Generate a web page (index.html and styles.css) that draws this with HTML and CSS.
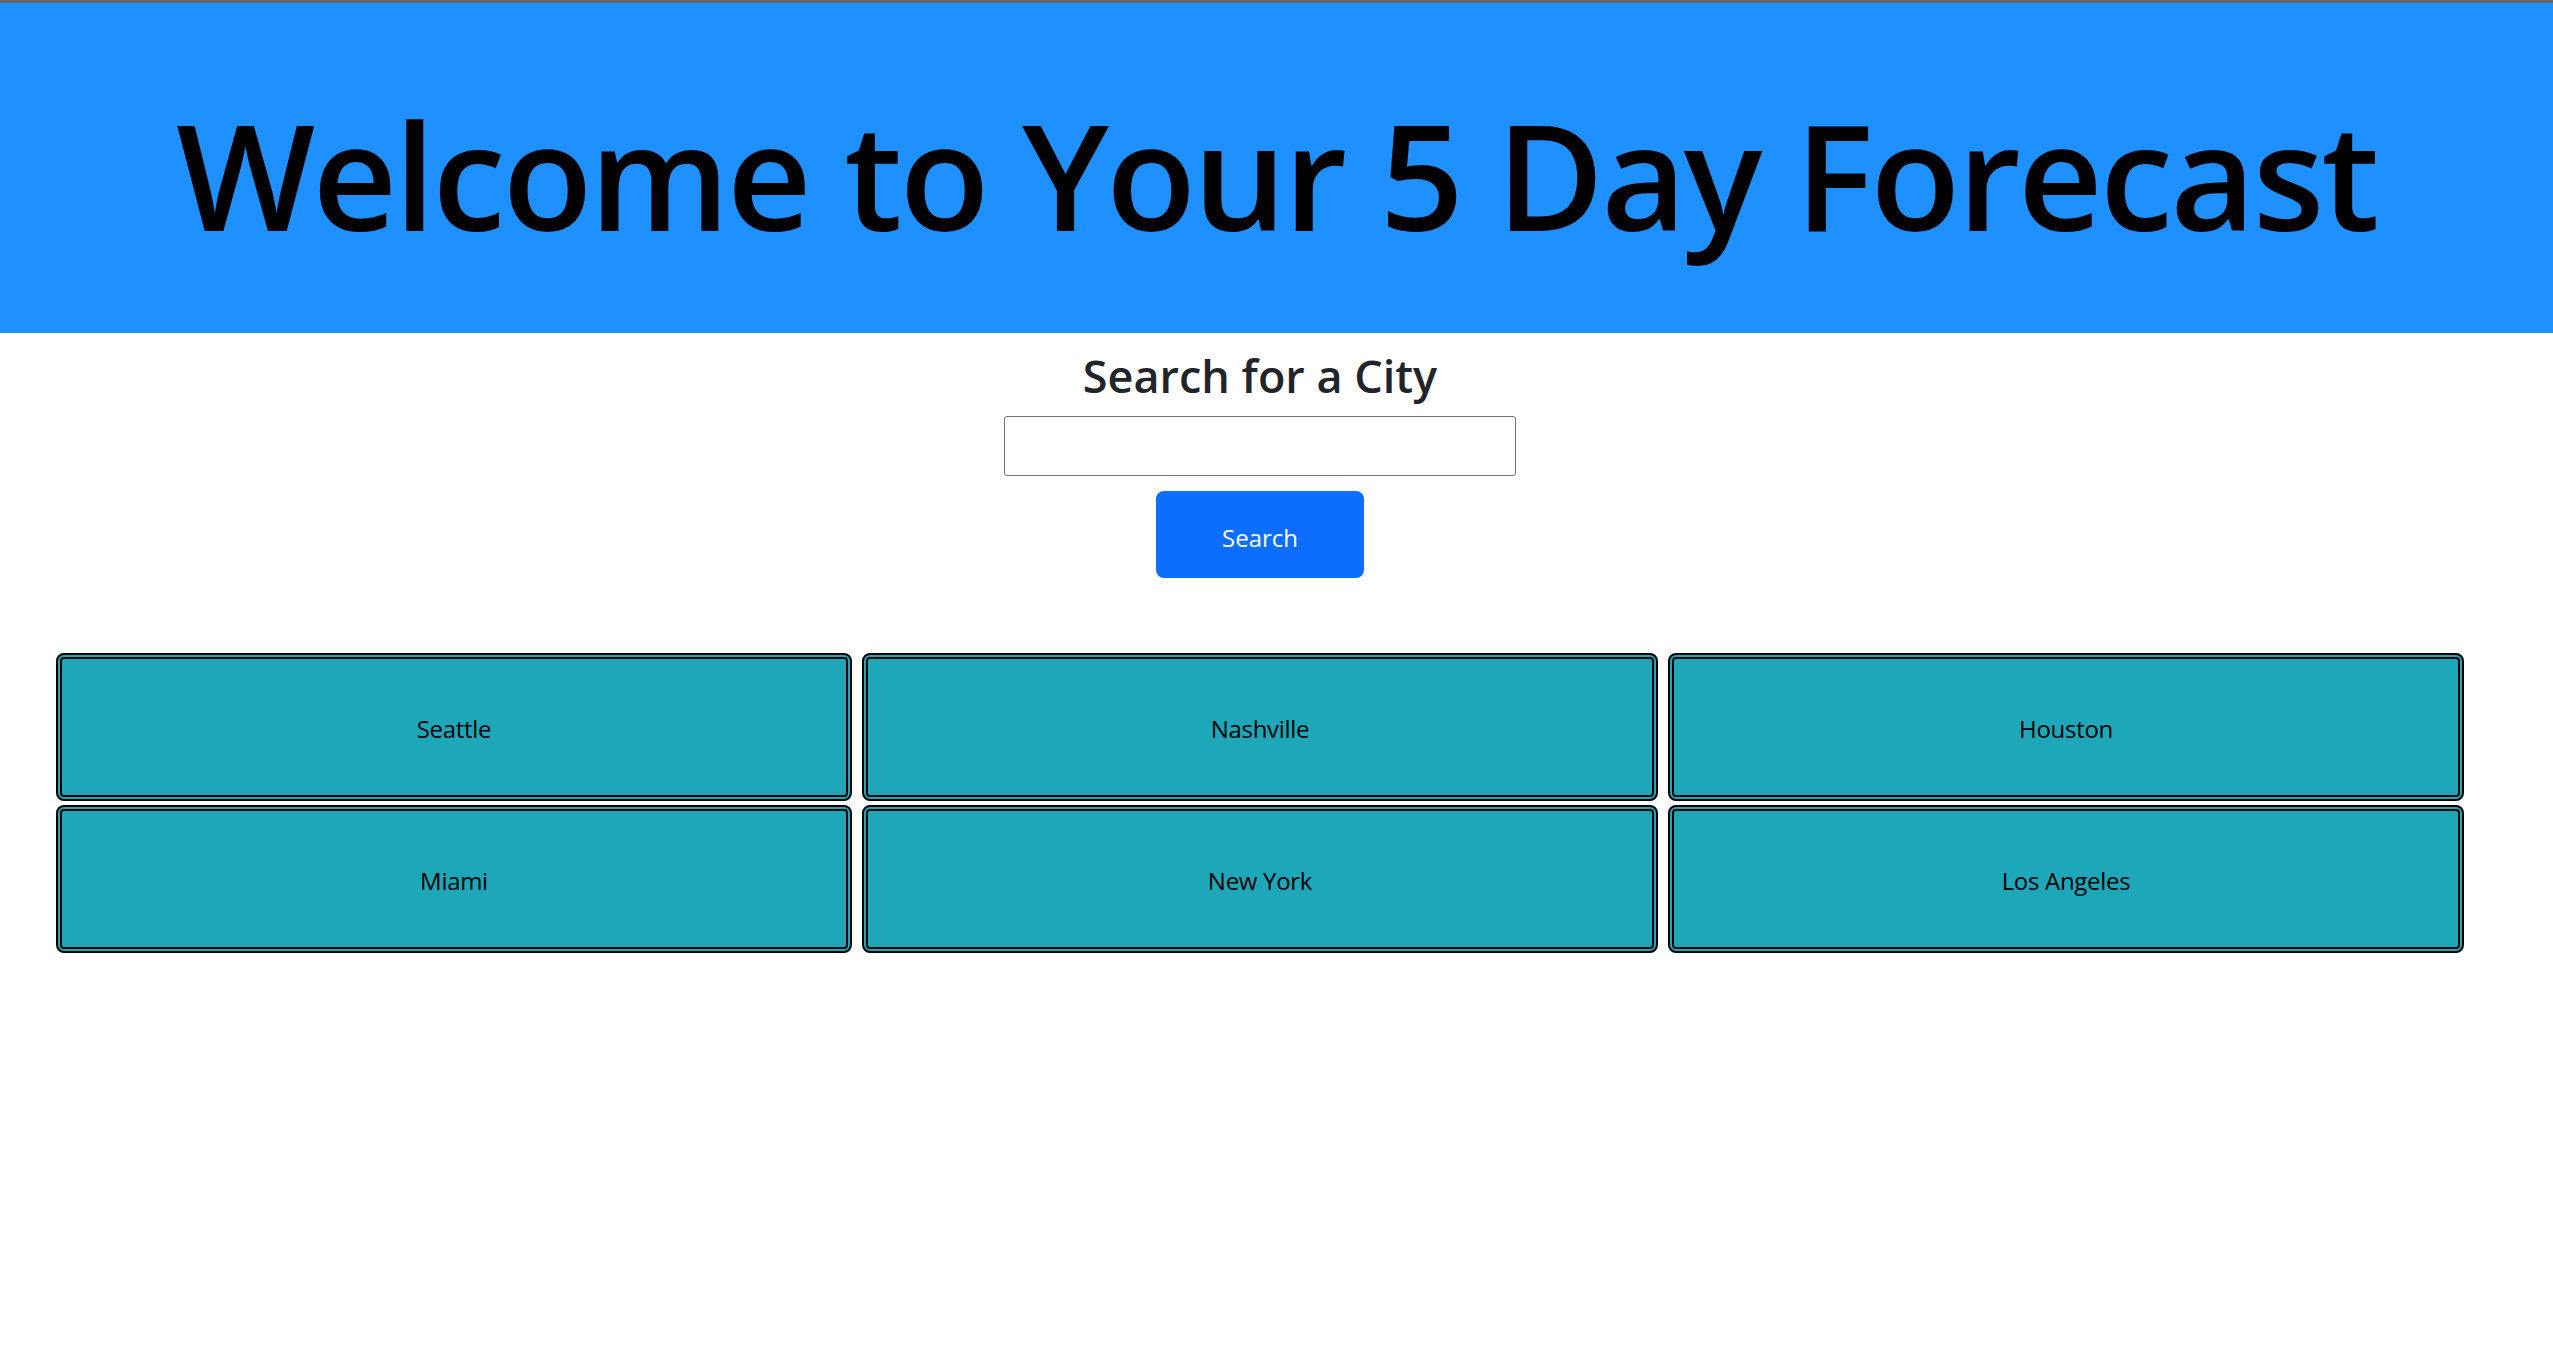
FILE: index.html
```html
<!DOCTYPE html>
<html lang="en">
<head>
<meta charset="utf-8">
<title>5 Day Forecast</title>
<link rel="stylesheet" href="styles.css">
</head>
<body>
<header class="hero">
  <h1 class="hero-title">Welcome to Your 5 Day Forecast</h1>
</header>
<main class="main">
  <section class="search">
    <h2 class="search-title">Search for a City</h2>
    <input class="search-input" type="text" aria-label="City">
    <button class="search-btn" type="button">Search</button>
  </section>
  <section class="cities">
    <button class="city" type="button">Seattle</button>
    <button class="city" type="button">Nashville</button>
    <button class="city" type="button">Houston</button>
    <button class="city" type="button">Miami</button>
    <button class="city" type="button">New York</button>
    <button class="city" type="button">Los Angeles</button>
  </section>
</main>
</body>
</html>
```

FILE: styles.css
```css
* { box-sizing: border-box; }

body {
  margin: 0;
  background: #fff;
  font-family: "Open Sans", "Noto Sans", "Liberation Sans", sans-serif;
  color: #212529;
}

.hero {
  border-top: 3px solid #666a6e;
  background: #1e90ff;
  height: 333px;
  display: flex;
  align-items: center;
  justify-content: center;
  padding-top: 12px;
}

.hero-title {
  margin: 0;
  font-size: 147px;
  line-height: 1;
  font-weight: 600;
  letter-spacing: -2.8px;
  color: #000;
  white-space: nowrap;
}

.main {
  width: 2520px;
}

.search {
  display: flex;
  flex-direction: column;
  align-items: center;
}

.search-title {
  margin: 16px 0 0;
  font-size: 45px;
  line-height: 54px;
  font-weight: 600;
  color: #212529;
}

.search-input {
  margin-top: 13px;
  width: 512px;
  height: 60px;
  border: 1px solid #767676;
  border-radius: 3px;
  font: inherit;
  font-size: 24px;
  padding: 0 8px;
}

.search-btn {
  margin-top: 15px;
  width: 208px;
  height: 87px;
  border: none;
  border-radius: 8px;
  background: #0d6efd;
  color: #fff;
  font: inherit;
  font-size: 24px;
  padding: 5px 0 0;
}

.cities {
  margin-top: 75px;
  padding: 0 56px;
  display: grid;
  grid-template-columns: repeat(3, 1fr);
  column-gap: 10px;
  row-gap: 4px;
}

.city {
  height: 148px;
  border: 6px double #000;
  border-radius: 8px;
  background: #1ea6b9;
  color: #000;
  font: inherit;
  font-size: 24px;
  letter-spacing: -0.3px;
  padding: 3px 0 0;
}
```
